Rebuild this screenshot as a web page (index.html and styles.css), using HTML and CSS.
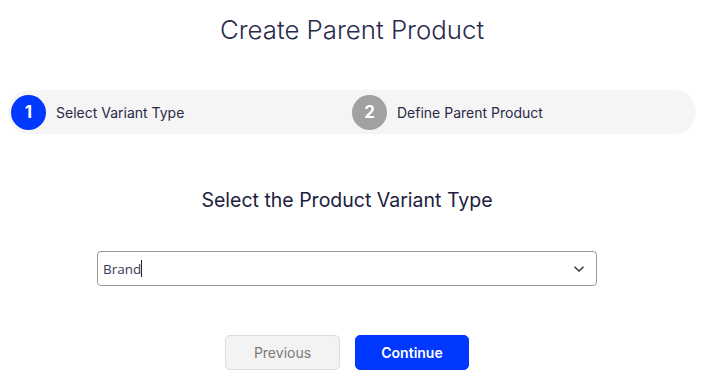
FILE: index.html
```html
<!DOCTYPE html>
<html>
<head>
<meta charset="utf-8">
<link rel="stylesheet" href="styles.css">
</head>
<body>
<div class="page">
  <h1 class="title">Create Parent Product</h1>
  <div class="stepper">
    <div class="step">
      <span class="num active">1</span>
      <span class="label">Select Variant Type</span>
    </div>
    <div class="step">
      <span class="num">2</span>
      <span class="label">Define Parent Product</span>
    </div>
  </div>
  <div class="content">
    <h2 class="subtitle">Select the Product Variant Type</h2>
    <div class="select">
      <span class="value">Brand</span><span class="caret"></span>
      <svg class="chev" width="12" height="8" viewBox="0 0 12 8"><path d="M1.5 1.8 L6 6 L10.5 1.8" fill="none" stroke="#333" stroke-width="1.4"/></svg>
    </div>
    <div class="actions">
      <button class="btn prev">Previous</button>
      <button class="btn next">Continue</button>
    </div>
  </div>
</div>
</body>
</html>
```

FILE: styles.css
```css
* { box-sizing: border-box; }
html, body { margin: 0; padding: 0; background: #fff; }
body { font-family: Inter, "Noto Sans", sans-serif; color: #22223f; }
.page { display: flex; flex-direction: column; align-items: center; padding: 0 7px 0 8px; }
.title { margin: 14px 0 0; font-size: 25.8px; font-weight: 300; line-height: 32px; color: #2a2a4c; letter-spacing: 0; }
.stepper { align-self: stretch; margin-top: 44px; height: 44px; background: #f5f5f5; border-radius: 22px; display: grid; grid-template-columns: 1fr 1fr; align-items: center; padding: 0 3px; }
.step { display: flex; align-items: center; }
.num { width: 35px; height: 35px; border-radius: 50%; background: #a1a1a1; color: #fff; font-weight: 700; font-size: 17px; display: flex; align-items: center; justify-content: center; }
.num.active { background: #0038ff; }
.label { margin-left: 10px; font-size: 14px; color: #2a2a48; }
.content { align-self: stretch; display: flex; flex-direction: column; align-items: center; padding-right: 10px; }
.subtitle { margin: 53px 0 0; font-size: 19.5px; font-weight: 400; line-height: 26px; color: #20203d; }
.select { margin-top: 38px; width: 500px; height: 35px; border: 1px solid #9a9a9a; border-radius: 4px; display: flex; align-items: center; padding: 0 11px 0 5px; }
.value { font-family: "Open Sans", sans-serif; font-size: 13.5px; color: #3a3a58; }
.caret { width: 1px; height: 17px; background: #222; }
.chev { margin-left: auto; }
.actions { margin-top: 49px; display: flex; gap: 15px; }
.btn { width: 115px; height: 35px; border-radius: 5px; font-family: Inter, sans-serif; font-size: 14px; cursor: pointer; }
.prev { background: #f3f3f3; border: 1px solid #dcdcdc; color: #7a7a7a; }
.next { width: 114px; background: #0038ff; border: 1px solid #0038ff; color: #fff; font-weight: 600; }
```
